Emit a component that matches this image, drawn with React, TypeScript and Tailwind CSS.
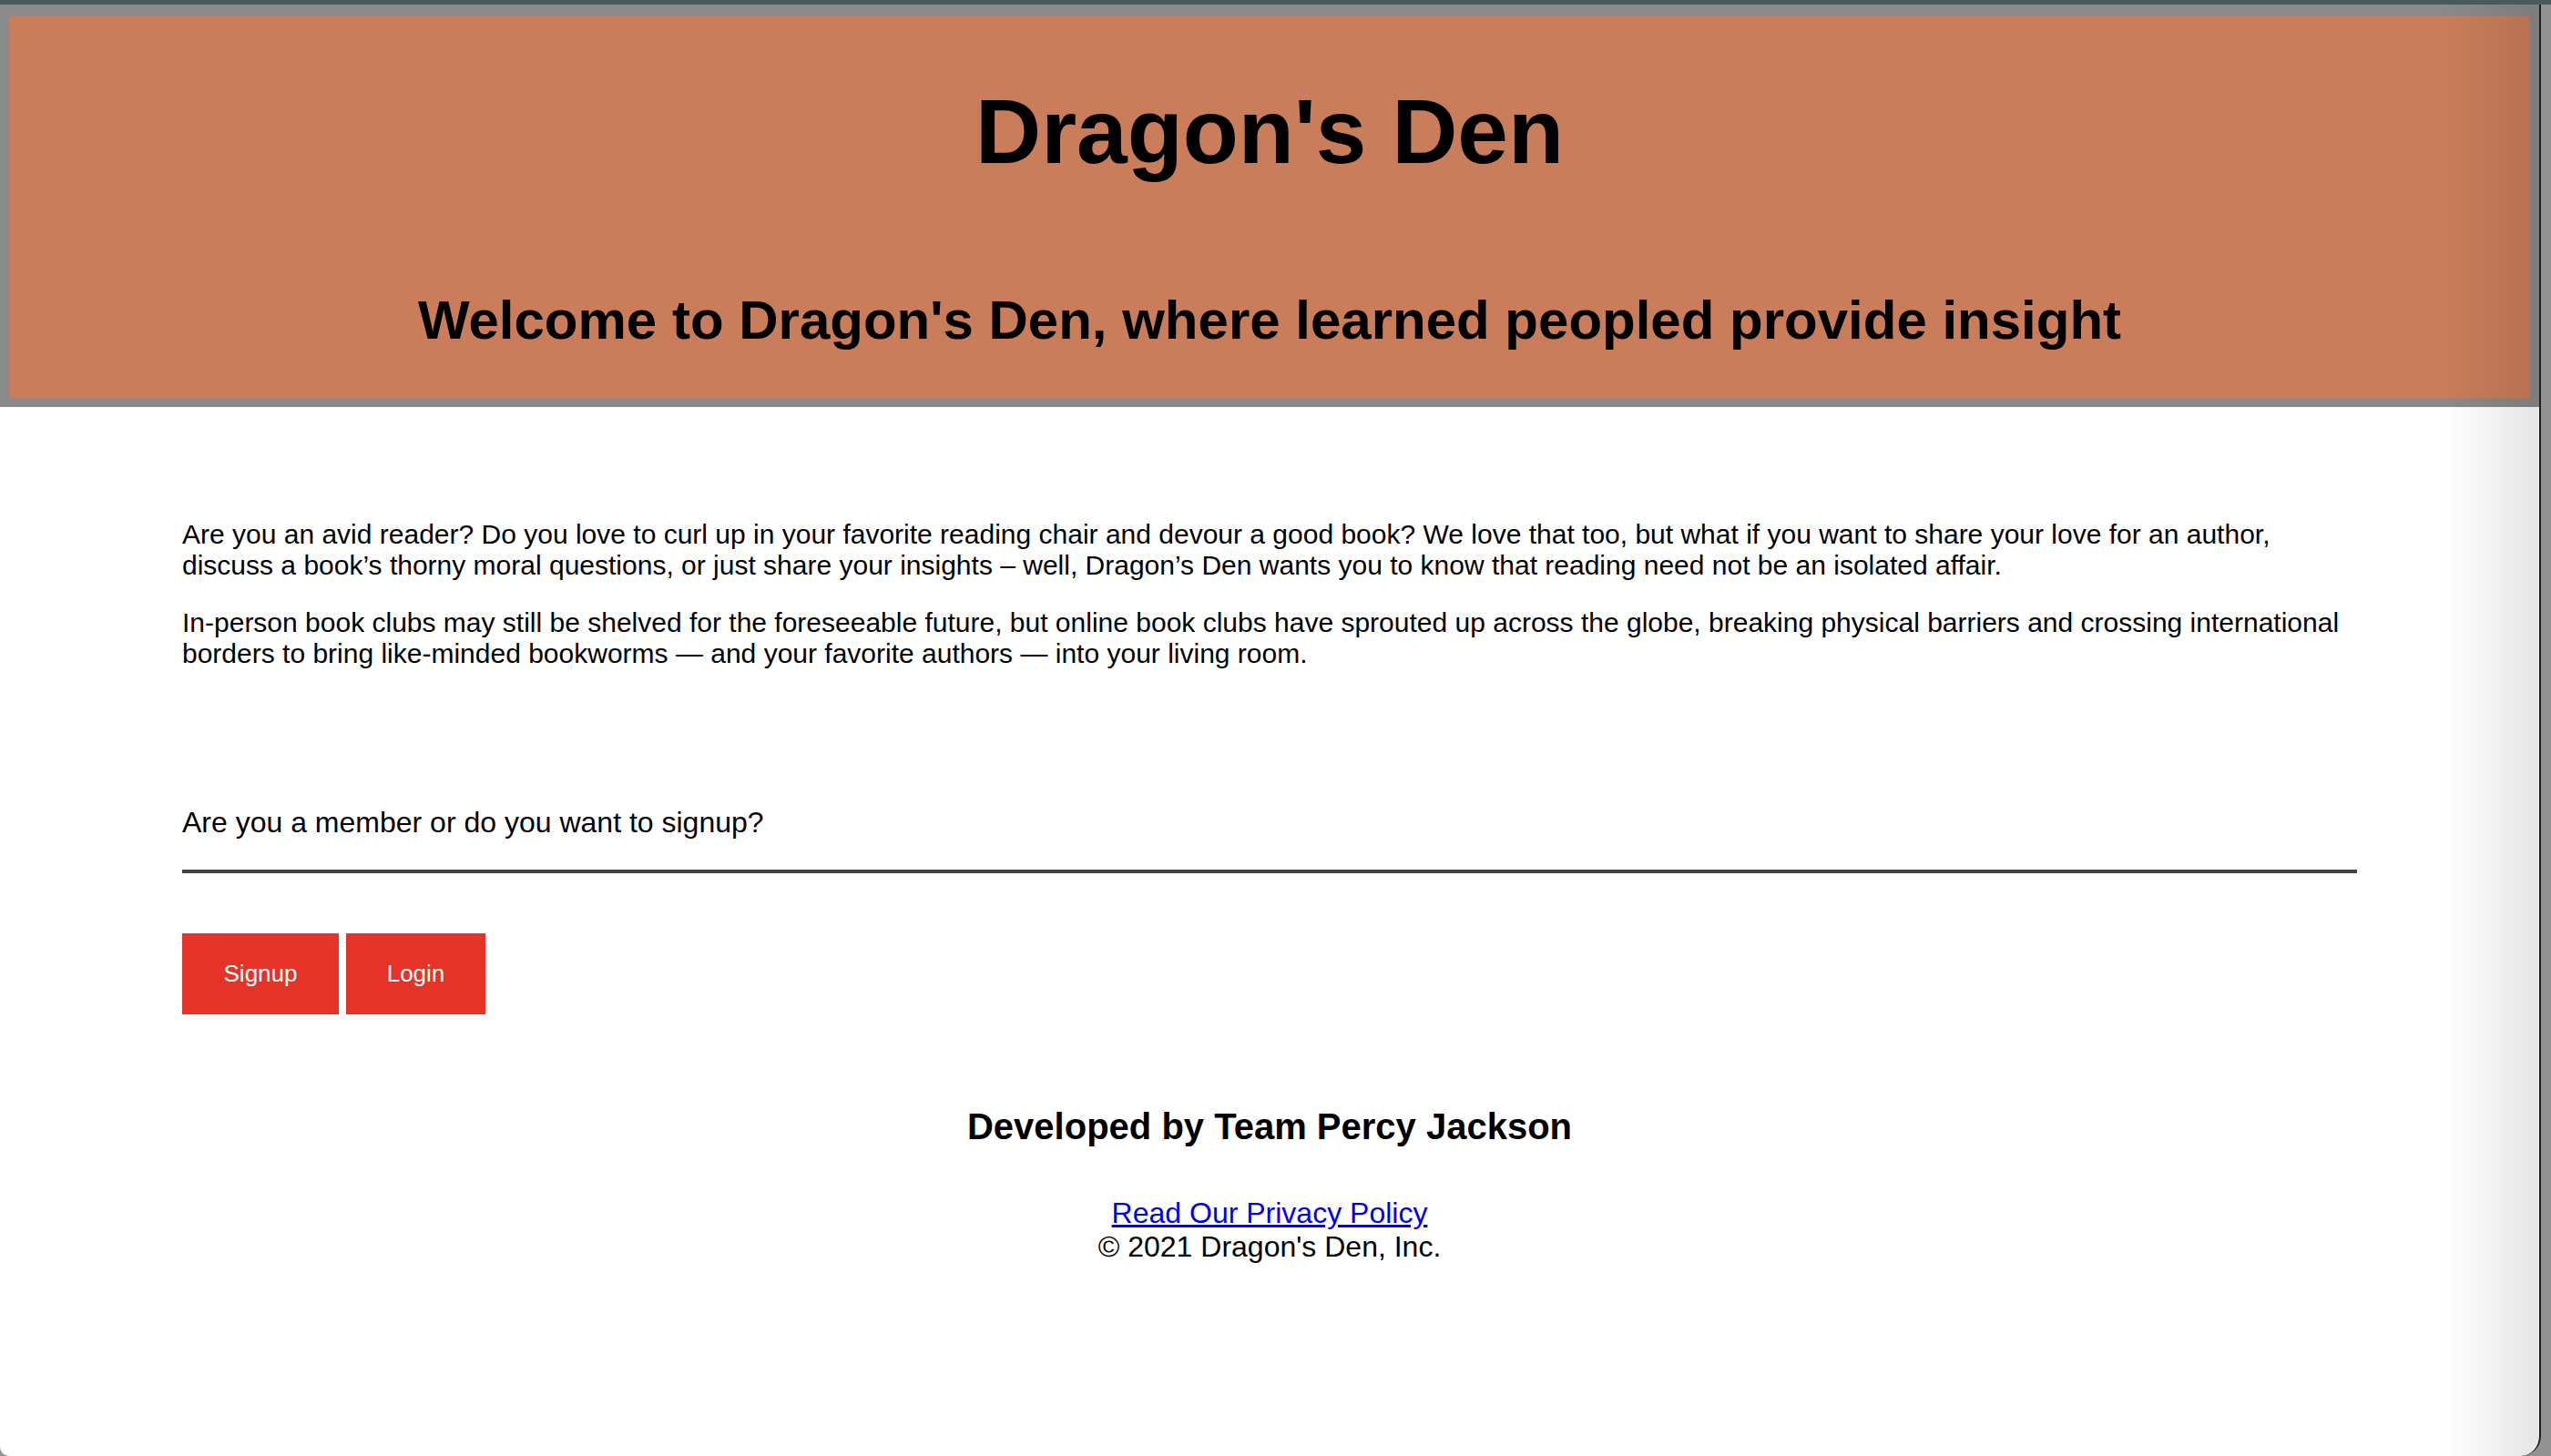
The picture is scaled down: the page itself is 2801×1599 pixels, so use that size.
import React from "react"

export default function App() {
  return (
    <div className="w-[2801px] h-[1599px] bg-[#929292] flex flex-col overflow-hidden font-['Liberation_Sans',Arial,sans-serif] text-black">
      {/* window top strip */}
      <div className="h-[5px] shrink-0 bg-[#4a5862]" />

      <div className="flex flex-1 min-h-0">
        <div className="relative w-[2790px] shrink-0 bg-white border-r-2 border-[#1f1f1f] rounded-br-[22px] rounded-bl-[10px] overflow-hidden">
          {/* Header */}
          <header className="border-[10px] border-t-[12px] border-[#8b8a8a] bg-[#ca7d5a] flex flex-col items-center pt-[77px] pb-[55px]">
            <h1 className="text-[100px] leading-[100px] font-bold">Dragon's Den</h1>
            <h2 className="mt-[128px] text-[60px] leading-[60px] font-bold">
              Welcome to Dragon's Den, where learned peopled provide insight
            </h2>
          </header>

          {/* Main */}
          <main className="px-[200px] pt-[123px]">
            <div className="flex flex-col gap-[29px] text-[30px] leading-[34px]">
              <p>
                Are you an avid reader? Do you love to curl up in your favorite reading chair and devour a good book? We
                love that too, but what if you want to share your love for an author, discuss a book’s thorny moral
                questions, or just share your insights – well, Dragon’s Den wants you to know that reading need not be an
                isolated affair.
              </p>
              <p>
                In-person book clubs may still be shelved for the foreseeable future, but online book clubs have sprouted
                up across the globe, breaking physical barriers and crossing international borders to bring like-minded
                bookworms — and your favorite authors — into your living room.
              </p>
            </div>

            <p className="mt-[150px] text-[32px] leading-[37px]">Are you a member or do you want to signup?</p>
            <div className="mt-[33px] h-[4px] bg-[#444242]" />

            <div className="mt-[66px] flex gap-[8px]">
              <button className="h-[89px] w-[172px] bg-[#e53327] text-white text-[26px]">Signup</button>
              <button className="h-[89px] w-[153px] bg-[#e53327] text-white text-[26px]">Login</button>
            </div>
          </main>

          {/* Footer */}
          <footer className="mt-[100px] flex flex-col items-center">
            <h3 className="text-[40px] leading-[46px] font-bold">Developed by Team Percy Jackson</h3>
            <a href="#" className="mt-[54px] text-[32px] leading-[37px] text-[#0000ee] underline">
              Read Our Privacy Policy
            </a>
            <p className="text-[32px] leading-[37px]">© 2021 Dragon's Den, Inc.</p>
          </footer>

          {/* window edge shade */}
          <div className="pointer-events-none absolute top-0 bottom-0 right-0 w-[110px] bg-linear-to-r from-transparent to-black/10" />
        </div>
      </div>
    </div>
  )
}
